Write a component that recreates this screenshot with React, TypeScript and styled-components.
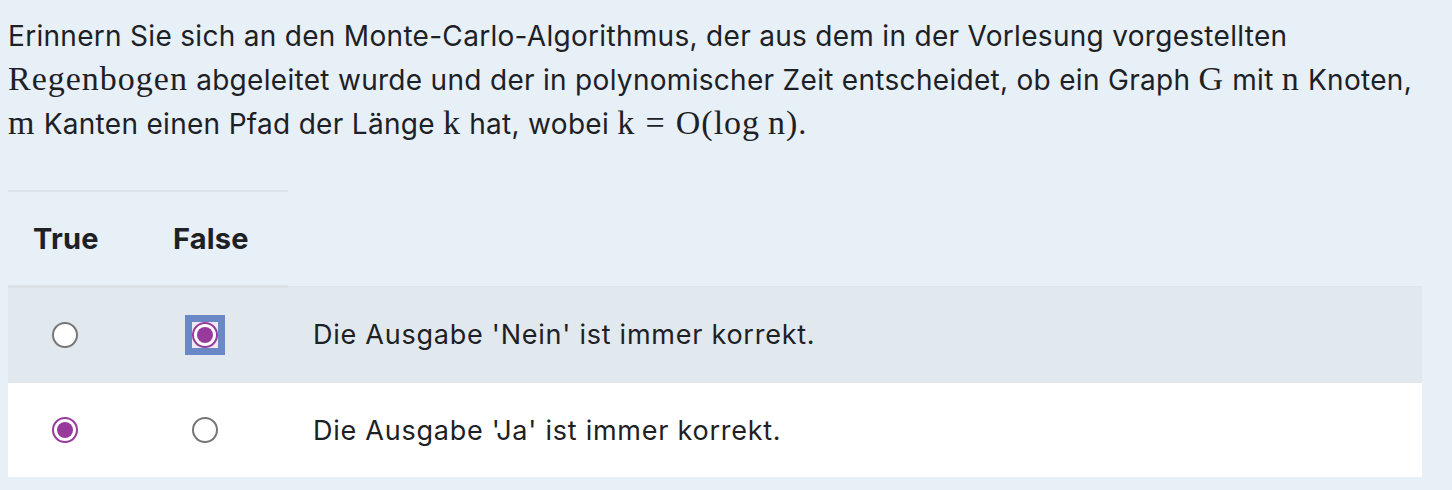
import React from "react";
import styled, { createGlobalStyle } from "styled-components";

const Global = createGlobalStyle`
  html, body { margin: 0; padding: 0; }
  body {
    background: #e7eff7;
    font-family: Inter, "Noto Sans", "Liberation Sans", sans-serif;
    color: #1d2125;
  }
`;

const Page = styled.div`
  padding: 14px 8px 8px 8px;
  width: 1414px;
`;

const Question = styled.div`
  margin: 0 0 44px 0;
  font-size: 28px;
  line-height: 44px;
  letter-spacing: 0.3px;
`;

const Line = styled.span`
  display: block;
  white-space: nowrap;
  height: 44px;
`;

const M = styled.span`
  font-family: "Liberation Serif", "Times New Roman", serif;
  font-size: 34px;
  letter-spacing: 1px;
  line-height: 1;
`;

const Rel = styled.span`
  padding: 0 0.3em;
`;

const Table = styled.table`
  border-collapse: collapse;
  width: 1414px;
  table-layout: fixed;
`;

const HeadCell = styled.th<{ $empty?: boolean }>`
  height: 93px;
  padding: 0 0 0 25px;
  text-align: left;
  font-size: 29px;
  font-weight: 700;
  letter-spacing: 0.2px;
  border-top: ${(p) => (p.$empty ? "none" : "2px solid #dde3ea")};
  border-bottom: ${(p) => (p.$empty ? "none" : "3px solid #dbe1e7")};
`;

const Row = styled.tr<{ $shade?: boolean }>`
  background: ${(p) => (p.$shade ? "#e1e9ee" : "#ffffff")};
  border-top: 1px solid #dfe6ec;
`;

const RadioCell = styled.td`
  height: 94px;
  padding: 0 0 0 44px;
  vertical-align: middle;
`;

const TextCell = styled.td`
  padding: 0 0 0 25px;
  font-size: 27px;
  letter-spacing: 0.75px;
  vertical-align: middle;
`;

const Radio = styled.span<{ $checked?: boolean }>`
  box-sizing: border-box;
  width: 26px;
  height: 26px;
  border-radius: 50%;
  border: 2px solid ${(p) => (p.$checked ? "#983a9c" : "#767676")};
  background: #ffffff;
  display: flex;
  align-items: center;
  justify-content: center;
  &::after {
    content: "";
    width: 16px;
    height: 16px;
    border-radius: 50%;
    background: ${(p) => (p.$checked ? "#983a9c" : "transparent")};
  }
`;

const FocusBox = styled.span`
  display: inline-flex;
  width: 26px;
  height: 26px;
  background: #ede8f3;
  box-shadow: 0 0 0 7px #6a87c6;
  vertical-align: middle;
`;

const RadioWrap = styled.span`
  display: inline-flex;
  vertical-align: middle;
`;

const rows = [
  { text: "Die Ausgabe 'Nein' ist immer korrekt.", value: "false", focused: true },
  { text: "Die Ausgabe 'Ja' ist immer korrekt.", value: "true", focused: false },
];

export default function App() {
  return (
    <>
      <Global />
      <Page>
        <Question>
          <Line>
            Erinnern Sie sich an den Monte-Carlo-Algorithmus, der aus dem in der Vorlesung vorgestellten
          </Line>
          <Line>
            <M>Regenbogen</M> abgeleitet wurde und der in polynomischer Zeit entscheidet, ob ein Graph <M>G</M> mit{" "}
            <M>n</M> Knoten,
          </Line>
          <Line>
            <M>m</M> Kanten einen Pfad der Länge <M>k</M> hat, wobei{" "}
            <M>
              k<Rel>=</Rel>O(log&thinsp;n)
            </M>
            .
          </Line>
        </Question>
        <Table>
          <colgroup>
            <col style={{ width: 140 }} />
            <col style={{ width: 140 }} />
            <col />
          </colgroup>
          <thead>
            <tr>
              <HeadCell>True</HeadCell>
              <HeadCell>False</HeadCell>
              <HeadCell $empty />
            </tr>
          </thead>
          <tbody>
            {rows.map((r, i) => (
              <Row key={i} $shade={i === 0}>
                <RadioCell>
                  <RadioWrap>
                    <Radio $checked={r.value === "true"} />
                  </RadioWrap>
                </RadioCell>
                <RadioCell>
                  {r.focused ? (
                    <FocusBox>
                      <Radio $checked={r.value === "false"} />
                    </FocusBox>
                  ) : (
                    <RadioWrap>
                      <Radio $checked={r.value === "false"} />
                    </RadioWrap>
                  )}
                </RadioCell>
                <TextCell>{r.text}</TextCell>
              </Row>
            ))}
          </tbody>
        </Table>
      </Page>
    </>
  );
}
